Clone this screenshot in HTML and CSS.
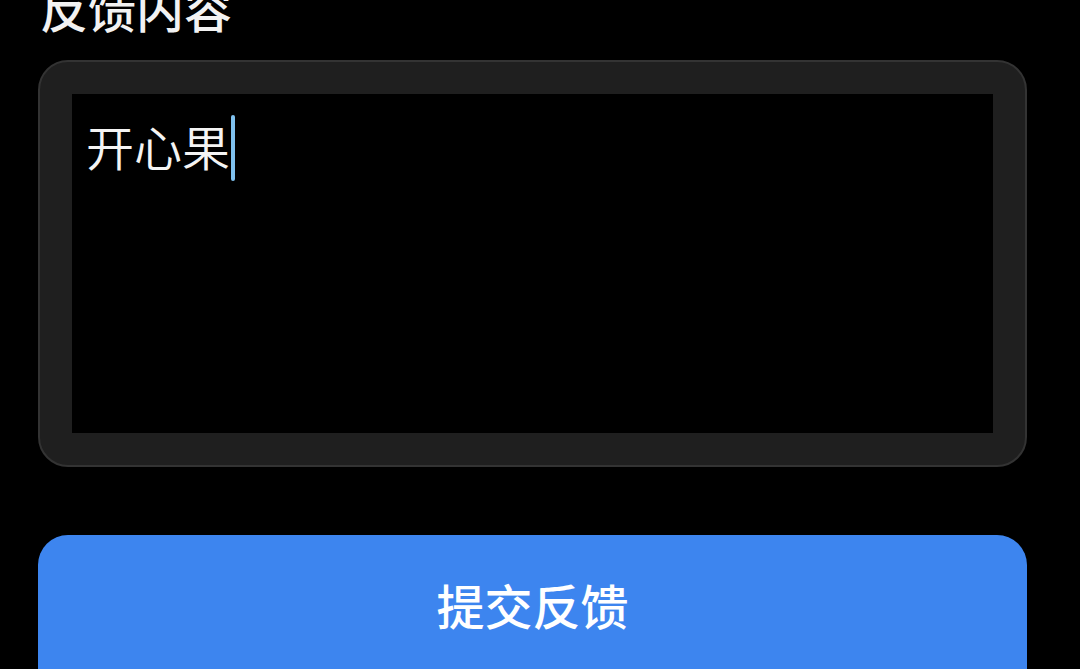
FILE: index.html
```html
<!DOCTYPE html>
<html lang="zh-CN">
<head>
<meta charset="utf-8">
<title>反馈内容</title>
<link rel="stylesheet" href="styles.css">
</head>
<body>
<main class="page">
  <h2 class="section-title">反馈内容</h2>
  <div class="field">
    <div class="textarea">
      <div class="line">
        <span class="typed">开心果</span><span class="caret"></span>
      </div>
    </div>
  </div>
  <button class="submit" type="button">提交反馈</button>
</main>
</body>
</html>
```
FILE: styles.css
```css
html, body {
  margin: 0;
  padding: 0;
  background: #000;
  height: 669px;
  overflow: hidden;
}
body {
  font-family: "Noto Sans CJK SC", "Noto Sans", sans-serif;
  color: #f2f2f2;
}
.page {
  width: 989px;
  padding-left: 38px;
  display: flex;
  flex-direction: column;
}
.section-title {
  margin: -17px 0 0 2px;
  font-size: 48px;
  line-height: 48px;
  font-weight: 500;
  color: #f2f2f2;
}
.field {
  margin-top: 29px;
  height: 407px;
  box-sizing: border-box;
  border: 2px solid #333333;
  border-radius: 30px;
  background: #1f1f1f;
  padding: 32px;
  display: flex;
}
.textarea {
  flex: 1;
  background: #000;
  padding: 21px 14px 0 14px;
}
.line {
  display: flex;
  align-items: center;
  height: 66px;
}
.typed {
  font-size: 48px;
  line-height: 48px;
  font-weight: 350;
  color: #f4f4f4;
  padding-bottom: 6px;
}
.caret {
  width: 4px;
  height: 66px;
  margin-left: 1px;
  border-radius: 2px;
  background: #7fc1ee;
}
.submit {
  margin-top: 68px;
  height: 180px;
  flex-shrink: 0;
  border: none;
  border-radius: 30px;
  background: #3d85ef;
  color: #fff;
  font-family: "Noto Sans CJK SC", "Noto Sans", sans-serif;
  font-size: 48px;
  font-weight: 500;
  padding: 0 0 42px 0;
  cursor: pointer;
}
```
